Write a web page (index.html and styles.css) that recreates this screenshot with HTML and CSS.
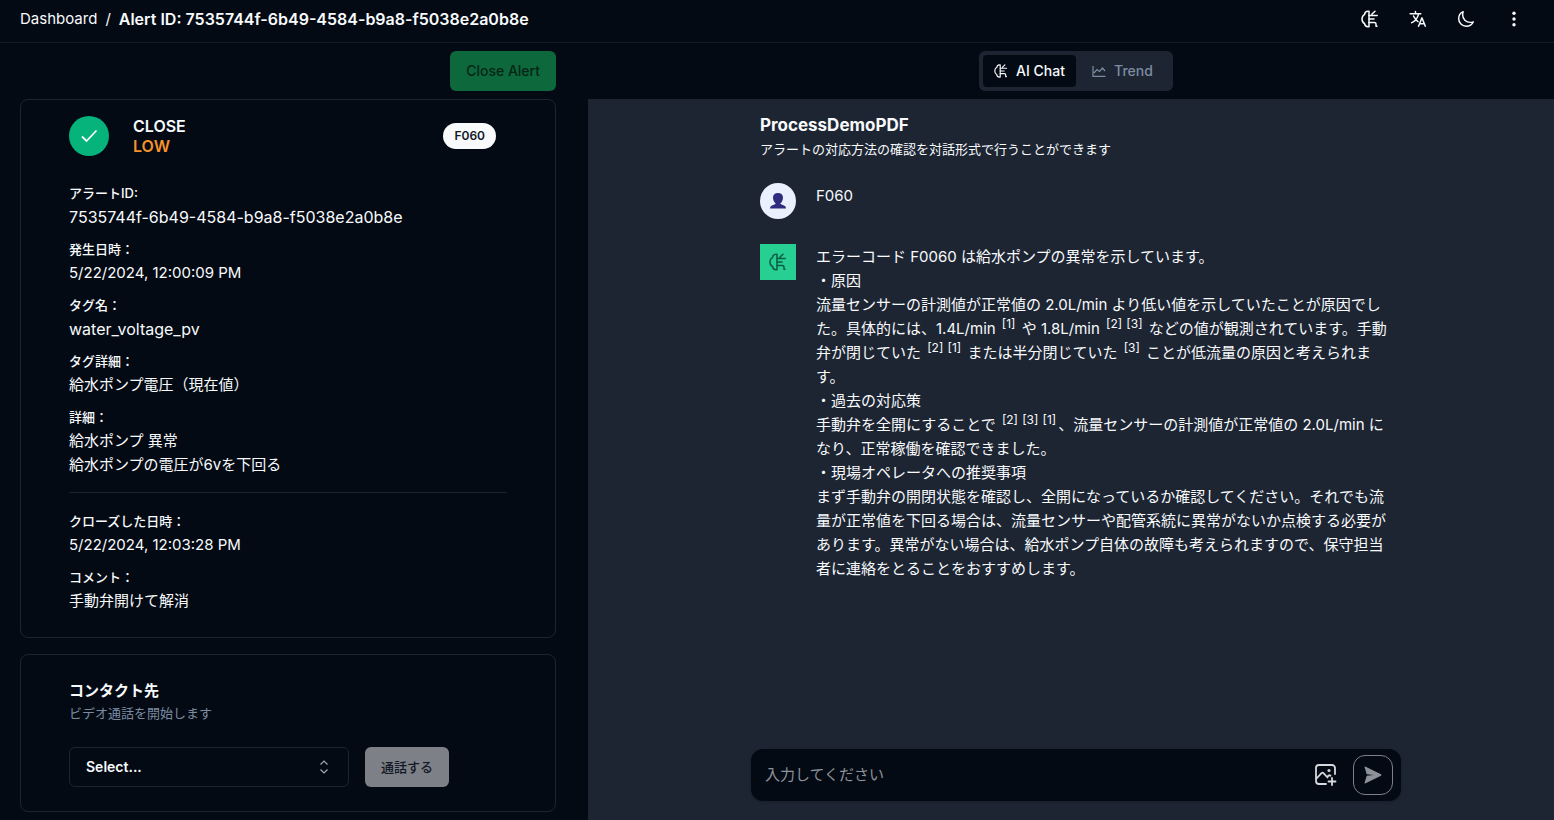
FILE: index.html
```html
<!DOCTYPE html>
<html lang="ja">
<head>
<meta charset="utf-8">
<meta name="viewport" content="width=device-width, initial-scale=1">
<title>Alert detail</title>
<link rel="stylesheet" href="styles.css">
</head>
<body>
<svg class="sprite" aria-hidden="true">
  <symbol id="brain" viewBox="0 0 18 18">
    <g fill="none" stroke="currentColor" stroke-width="1.5" stroke-linecap="round" stroke-linejoin="round">
      <path d="M8 1.2H7C5 1.2 3.8 2.500 3.600 4.300C2 5.200 1 7 1 9s1 3.800 2.600 4.700C3.800 15.500 5 16.800 7 16.800H8z"/>
      <path d="M8 5.500h8.200M11 5.500v-1.500l3-2.800M8 9h5M8 12.400h5.500q1.500 0 1.500 1.500v2.300h1"/>
    </g>
  </symbol>
</svg>
<div class="app">
  <header class="topbar">
    <nav class="crumbs" aria-label="Breadcrumb">
      <a href="#">Dashboard</a><span>/</span><strong>Alert ID: 7535744f-6b49-4584-b9a8-f5038e2a0b8e</strong>
    </nav>
    <div class="tools">
      <button type="button" aria-label="AI"><svg><use href="#brain"/></svg></button>
      <button type="button" aria-label="Language">
        <svg viewBox="0 0 512 512" fill="none" stroke="currentColor" stroke-width="42" stroke-linecap="round" stroke-linejoin="round"><path d="M32 104h304M184 40v64M272 464l96-240 96 240M301 390h133M275 112S251 206 193 277 74 360 74 360M256 330s-35-27-72-75-56-85-56-85"/></svg>
      </button>
      <button type="button" aria-label="Theme">
        <svg viewBox="0 0 512 512" fill="none" stroke="currentColor" stroke-width="42" stroke-linejoin="round"><path d="M160 136c0-30.620 4.510-61.610 16-88C99.570 81.270 48 159.320 48 248c0 119.290 96.710 216 216 216 88.680 0 166.730-51.570 200-128-26.390 11.490-57.380 16-88 16-119.290 0-216-96.710-216-216z"/></svg>
      </button>
      <button type="button" aria-label="More">
        <svg viewBox="0 0 18 18" fill="currentColor"><circle cx="9" cy="3.300" r="1.700"/><circle cx="9" cy="9" r="1.700"/><circle cx="9" cy="14.700" r="1.700"/></svg>
      </button>
    </div>
  </header>
  <main class="main">
    <section class="left">
      <div class="actions"><button class="btn btn-close" type="button" disabled>Close Alert</button></div>
      <article class="card alert">
        <div class="status">
          <span class="check"><svg viewBox="0 0 18 18" fill="none" stroke="currentColor" stroke-width="1.800"><path d="M2 9.500l4.500 4.500L16.500 3.500"/></svg></span>
          <div class="state"><div>CLOSE</div><div class="low">LOW</div></div>
          <span class="badge">F060</span>
        </div>
        <dl class="fields">
          <div><dt>アラートID:</dt><dd class="code">7535744f-6b49-4584-b9a8-f5038e2a0b8e</dd></div>
          <div><dt>発生日時：</dt><dd>5/22/2024, 12:00:09 PM</dd></div>
          <div><dt>タグ名：</dt><dd class="code">water_voltage_pv</dd></div>
          <div><dt>タグ詳細：</dt><dd>給水ポンプ電圧（現在値）</dd></div>
          <div><dt>詳細：</dt><dd>給水ポンプ 異常<br>給水ポンプの電圧が6vを下回る</dd></div>
        </dl>
        <hr>
        <dl class="fields">
          <div><dt>クローズした日時：</dt><dd>5/22/2024, 12:03:28 PM</dd></div>
          <div><dt>コメント：</dt><dd>手動弁開けて解消</dd></div>
        </dl>
      </article>
      <article class="card contact">
        <h2><label for="contact">コンタクト先</label></h2>
        <p>ビデオ通話を開始します</p>
        <form class="call">
          <div class="picker">
            <select id="contact"><option>Select...</option></select>
            <svg viewBox="0 0 16 16" fill="none" stroke="currentColor" stroke-width="1.200"><path d="M4.500 5.500L8 2l3.500 3.500M4.500 10.500L8 14l3.500-3.500"/></svg>
          </div>
          <button class="btn btn-call" type="button" disabled>通話する</button>
        </form>
      </article>
    </section>
    <section class="right">
      <div class="tabbar">
        <div class="tabs" role="tablist">
          <button class="tab active" type="button" role="tab" aria-selected="true"><svg><use href="#brain"/></svg>AI Chat</button>
          <button class="tab" type="button" role="tab" aria-selected="false"><svg viewBox="0 0 14 14" fill="none" stroke="currentColor" stroke-width="1.200"><path d="M1 2v10.400h12.500M2 9l3-3.500 2.500 2L10.500 4l2.500 3"/></svg>Trend</button>
        </div>
      </div>
      <div class="panel">
        <div class="chat">
          <h1>ProcessDemoPDF</h1>
          <p class="lead">アラートの対応方法の確認を対話形式で行うことができます</p>
          <div class="msg">
            <span class="avatar user"><svg viewBox="0 0 16 16" fill="currentColor"><path d="M8 0C4.800 0 3 1.800 3 4.500c0 2.300 1 4.500 2.500 5.700v.8L1.500 12.800Q0 13.600 0 15.500h16q0-1.900-1.500-2.700L10.500 11v-.8C12 9 13 6.800 13 4.500 13 1.800 11.200 0 8 0z"/></svg></span>
            <p>F060</p>
          </div>
          <div class="msg">
            <span class="avatar bot"><svg><use href="#brain"/></svg></span>
            <p>エラーコード F0060 は給水ポンプの異常を示しています。<br>・原因<br>流量センサーの計測値が正常値の 2.0L/min より低い値を示していたことが原因でした。具体的には、1.4L/min <span class="refs"><sup>[1]</sup></span> や 1.8L/min <span class="refs"><sup>[2]</sup> <sup>[3]</sup></span> などの値が観測されています。手動弁が閉じていた <span class="refs"><sup>[2]</sup> <sup>[1]</sup></span> または半分閉じていた <span class="refs"><sup>[3]</sup></span> ことが低流量の原因と考えられます。<br>・過去の対応策<br>手動弁を全開にすることで <span class="refs"><sup>[2]</sup> <sup>[3]</sup> <sup>[1]</sup></span>、流量センサーの計測値が正常値の 2.0L/min になり、正常稼働を確認できました。<br>・現場オペレータへの推奨事項<br>まず手動弁の開閉状態を確認し、全開になっているか確認してください。それでも流量が正常値を下回る場合は、流量センサーや配管系統に異常がないか点検する必要があります。異常がない場合は、給水ポンプ自体の故障も考えられますので、保守担当者に連絡をとることをおすすめします。</p>
          </div>
        </div>
        <form class="composer">
          <input type="text" placeholder="入力してください" aria-label="入力してください">
          <button class="attach" type="button" aria-label="Add image">
            <svg viewBox="0 0 22 22" fill="none" stroke="currentColor" stroke-width="1.800" stroke-linecap="round" stroke-linejoin="round"><path d="M20 10V4a3 3 0 0 0-3-3H4a3 3 0 0 0-3 3v13a3 3 0 0 0 3 3h7M1.500 14.500L6.500 9.200q1-1 2 0l4 4.300M12 13l1.500-1.300q1-.8 2 0M17 14v7M13.500 17.500h7"/><circle cx="14" cy="6.500" r=".7"/></svg>
          </button>
          <button class="send" type="button" aria-label="Send">
            <svg viewBox="0 0 18 18" fill="currentColor"><path d="M1.200.5Q.3.200.6 1.200L2.700 8.200l7 .8-7 .8L.6 16.800Q.3 17.800 1.200 17.500L17 9.700q1-.7 0-1.400z"/></svg>
          </button>
        </form>
      </div>
    </section>
  </main>
</div>
</body>
</html>
```
FILE: styles.css
```css
* { box-sizing: border-box; }
body, h1, h2, p, dl, dd { margin: 0; }
body {
  background: #030a14;
  color: #f8fafc;
  font: 15px/24px Inter, "Noto Sans CJK JP", sans-serif;
}
button, input, select { font: inherit; color: inherit; }
button { border: 0; padding: 0; background: none; }
svg { display: block; flex: none; }
.sprite { position: absolute; width: 0; height: 0; }

.app { display: flex; flex-direction: column; height: 100vh; overflow: hidden; }
.topbar {
  display: flex;
  justify-content: space-between;
  align-items: center;
  flex: none;
  padding: 7px 28px 11px 20px;
  border-bottom: 1px solid #111a26;
}
.crumbs { display: flex; gap: 8px; white-space: nowrap; }
.crumbs a { color: inherit; text-decoration: none; }
.crumbs strong { font-size: 16px; font-weight: 600; }
.tools { display: flex; gap: 24px; }
.tools button { display: grid; place-items: center; width: 24px; height: 24px; }
.tools svg { width: 18px; height: 18px; }

.main { flex: 1; min-height: 0; display: grid; grid-template-columns: minmax(0, 588fr) minmax(0, 966fr); }
.left { display: flex; flex-direction: column; padding: 8px 32px 8px 20px; min-height: 0; }
.actions { display: flex; justify-content: flex-end; margin-bottom: 8px; }
.btn { height: 40px; padding: 0 16px; border-radius: 6px; font-size: 14px; font-weight: 500; }
.btn-close { background: #0d683b; color: #062518; }
.btn-call { background: #7d8087; color: #131926; font-size: 13px; }

.card { flex: none; border: 1px solid #1b2433; border-radius: 8px; }
.alert { padding: 16px 48px 24px; margin-bottom: 16px; }
.status { display: flex; align-items: center; gap: 24px; padding-right: 11px; margin-bottom: 27px; }
.check { display: grid; place-items: center; width: 40px; height: 40px; border-radius: 50%; background: #06b37a; }
.check svg { width: 18px; height: 18px; }
.state { flex: 1; font-size: 16px; line-height: 20px; font-weight: 600; }
.low { color: #f7922a; }
.badge {
  padding: 3px 11px;
  border-radius: 13px;
  background: #f8fafc;
  color: #111827;
  font-size: 12px;
  line-height: 20px;
  font-weight: 600;
}
.fields { display: grid; gap: 10px; }
.fields dt { margin-bottom: 2px; font-size: 13px; line-height: 20px; font-weight: 500; }
.fields .code { font-size: 16px; }
hr { height: 1px; margin: 15px 0 18px; border: 0; background: #1b2433; }

.contact { padding: 24px 48px; }
.contact h2 { font-size: 15px; font-weight: 600; }
.contact p { color: #7c8ba1; font-size: 13px; line-height: 20px; margin-bottom: 24px; }
.call { display: flex; gap: 16px; }
.picker { display: grid; align-items: center; flex: 0 1 280px; }
.picker select, .picker svg { grid-area: 1 / 1; }
.picker select {
  appearance: none;
  width: 100%;
  height: 40px;
  padding: 0 16px;
  border: 1px solid #1b2433;
  border-radius: 6px;
  background: transparent;
  font-size: 14px;
  font-weight: 600;
}
.picker svg { width: 16px; height: 16px; justify-self: end; margin-right: 17px; color: #a3a8b0; pointer-events: none; }

.right { display: flex; flex-direction: column; min-height: 0; }
.tabbar { display: flex; justify-content: center; padding: 8px 0 8px 10px; }
.tabs { display: grid; grid-template-columns: 1fr 1fr; padding: 4px; border-radius: 6px; background: #1d2533; }
.tab {
  display: flex;
  align-items: center;
  justify-content: center;
  gap: 8px;
  height: 32px;
  padding: 0 11px;
  border-radius: 4px;
  color: #7c8ba1;
  font-size: 14px;
  font-weight: 500;
}
.tab svg { width: 14px; height: 14px; }
.tab.active { background: #030a14; color: #f8fafc; }

.panel { flex: 1; display: flex; flex-direction: column; min-height: 0; padding: 12px 0 19px 10px; background: #1d2533; }
.chat { flex: 1; width: 100%; max-width: 632px; margin: 0 auto; }
.chat h1 { font-size: 17px; line-height: 28px; font-weight: 700; }
.lead { font-size: 13px; line-height: 20px; }
.msg { display: flex; gap: 20px; margin-top: 24px; }
.msg p { flex: 1; min-width: 0; padding-top: 1px; }
.msg + .msg { margin-top: 25px; }
.avatar { display: grid; place-items: center; flex: none; width: 36px; height: 36px; }
.user { border-radius: 50%; background: #ebf0ff; color: #2e2c7e; }
.user svg { width: 16px; height: 16px; }
.bot { background: #27cf92; color: #0b5d46; }
.bot svg { width: 18px; height: 18px; }
.refs { margin: 0 2px; }
sup { font-size: 12px; line-height: 12px; }

.composer {
  display: flex;
  align-items: center;
  width: 100%;
  max-width: 650px;
  height: 52px;
  margin: 0 auto;
  padding: 0 8px 0 14px;
  border-radius: 12px;
  background: #030a14;
  box-shadow: 0 1px 3px #0003;
}
.composer input { flex: 1; min-width: 0; border: 0; padding: 0; background: none; outline: 0; }
.composer input::placeholder { color: #8e9299; opacity: 1; }
.attach { color: #d7d9dc; margin-right: 16px; }
.attach svg { width: 22px; height: 22px; }
.send { display: grid; place-items: center; width: 40px; height: 40px; border: 1px solid #7d8087; border-radius: 12px; color: #8e9197; }
.send svg { width: 18px; height: 18px; }
```
